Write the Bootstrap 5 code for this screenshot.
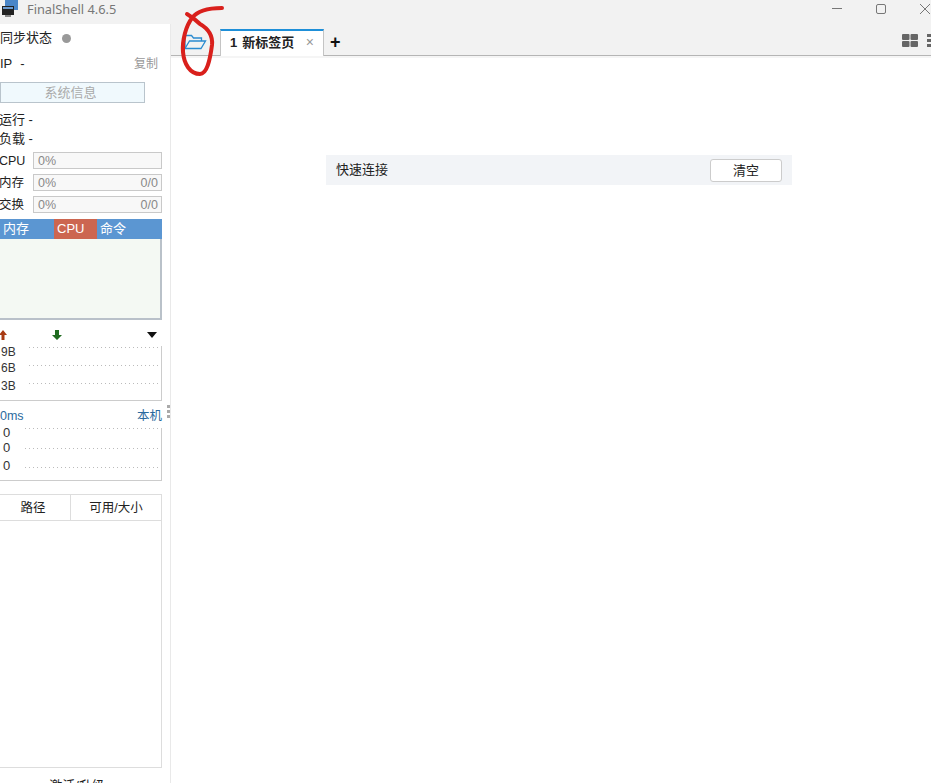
<!DOCTYPE html>
<html lang="zh-CN">

<head>
    <meta charset="UTF-8">
    <meta name="viewport" content="width=device-width, initial-scale=1.0">
    <title>FinalShell 4.6.5</title>
    <link href="https://cdn.jsdelivr.net/npm/bootstrap@5.3.0/dist/css/bootstrap.min.css" rel="stylesheet">
    <style>
        html, body { height: 783px; overflow: hidden; }
        body { font-family: "Liberation Sans", "Noto Sans CJK SC", sans-serif; font-size: 13px; color: #222; background: #fff; position: relative; }
        .title-bar { height: 24px; background: #f2f2f2; color: #777; }
        .title-bar .app-name { font-family: "Noto Sans", "Liberation Sans", sans-serif; font-size: 12.8px; line-height: 18px; margin-left: 9px; align-self: flex-start; }
        .win-btns { gap: 34px; margin-right: 1px; }
        .side { width: 171px; border-right: 1px solid #e9e9e9; padding-right: 8px; height: 759px; overflow: hidden; }
        .row-sync { height: 28px; }
        .sync-dot { width: 9px; height: 9px; border-radius: 50%; background: #999; margin-left: 10px; }
        .row-ip { height: 24px; }
        .ip-value { margin-left: 8px; }
        .muted-link { color: #999; font-size: 12px; margin-right: 4px; }
        .sys-btn { width: 145px; height: 21px; margin-top: 6px; background: #f0f9fd; border: 1px solid #b9c4cc; color: #aaa; line-height: 19px; text-align: center; padding-right: 4px; }
        .row-info { height: 19px; line-height: 19px; margin-left: -1px; }
        .row-info.first { margin-top: 7px; }
        .meters { margin-top: 4px; gap: 5px; }
        .meter-row { height: 17px; }
        .meter-label { width: 33px; flex: none; font-size: 12.5px; line-height: 19px; margin-left: -1px; white-space: nowrap; }
        .meter-bar { flex: 1; height: 17px; border: 1px solid #c9c9c9; background: #f8f8f8; color: #888; font-size: 12.5px; line-height: 17px; padding: 0 3px 0 4px; margin-left: 1px; }
        .mon-panel { margin-top: 6px; height: 101px; background: #f4f9f3; border: 2px solid #b9c1c9; border-top: 0; border-left: 0; }
        .mon-tabs { height: 20px; background: #5b96d2; color: #fff; line-height: 20px; margin-right: -2px; }
        .mon-tab { padding-left: 3px; width: 54px; }
        .mon-tab.on { background: #cc6650; width: 43px; }
        .arrow-row { height: 26px; padding: 3px 5px 0 0; }
        .arrow-down { margin-left: 44px; }
        .chart { border-right: 1px solid #ccc; border-bottom: 1px solid #ccc; color: #333; font-size: 12px; }
        .net-chart { height: 55px; padding-top: 1px; }
        .ping-chart { height: 53px; font-size: 13px; }
        .chart-row { line-height: 15px; }
        .chart-row .dots { flex: 1; height: 1px; margin-right: 2px; background: repeating-linear-gradient(90deg, #bbb 0 1px, transparent 1px 4px); }
        .chart-row .lbl { margin-top: -4px; height: 15px; }
        .chart-row:first-child .lbl { margin-top: -2px; }
        .net-chart .chart-row { height: 18px; }
        .net-chart .chart-row .lbl { width: 29px; padding-left: 1px; }
        .ping-chart .chart-row { height: 19px; }
        .ping-chart .chart-row:first-child { height: 20px; }
        .ping-chart .chart-row .lbl { width: 25px; padding-left: 3px; margin-top: -9px; }
        .ping-chart .chart-row:nth-child(2) .lbl { margin-top: -8px; }
        .ping-chart .chart-row:first-child .lbl { margin-top: -3px; }
        .ping-head { height: 27px; color: #2b6a9e; font-size: 12.5px; padding-top: 6px; position: relative; }
        .grip { position: absolute; right: -8px; top: 4px; width: 3px; height: 13px; background: repeating-linear-gradient(#aaa 0 3px, transparent 3px 5px); }
        .disk-table { margin-top: 13px; height: 274px; border: 1px solid #ddd; border-left: 0; }
        .disk-head { height: 26px; border-bottom: 1px solid #ddd; font-size: 12.5px; line-height: 26px; text-align: center; }
        .disk-head .c1 { width: 71px; padding-right: 4px; border-right: 1px solid #ddd; }
        .disk-head .c2 { flex: 1; }
        .upgrade { margin-top: 11px; line-height: 13px; text-align: center; padding-right: 8px; }
        .tab-bar { height: 32px; background: #f2f2f2; border-bottom: 1px solid #b5b5b5; box-shadow: 0 2px 0 #f5f5f5; }
        .open-btn { width: 49px; flex: none; padding: 7px 0 0 13px; }
        .sess-tab { width: 104px; height: 27px; background: #fff; border: 1px solid #c4c4c4; border-top: 2px solid #1e8fd8; border-bottom: 0; font-weight: 700; padding: 0 9px 2px; margin-bottom: -1px; }
        .sess-tab .num { margin-right: 5px; }
        .tab-close { color: #999; font-weight: 400; font-size: 14px; }
        .add-tab { font-size: 18px; font-weight: 700; line-height: 1; color: #111; margin-left: 6px; margin-top: 9px; }
        .view-btns { gap: 9px; padding-top: 10px; margin-right: -12px; }
        .quick-bar { width: 466px; height: 30px; margin: 99px 0 0 155px; background: #f2f4f7; padding: 0 10px; }
        .clear-btn { width: 72px; height: 23px; background: #fff; border: 1px solid #ccc; border-radius: 3px; line-height: 21px; text-align: center; }
        .scribble { position: absolute; left: 0; top: 0; pointer-events: none; }
    </style>
</head>

<body>
    <div class="title-bar d-flex align-items-start">
        <svg class="ms-0" width="18" height="18" viewBox="0 0 18 18">
            <path d="M5 -1h13v11h-13z" fill="#4a86c8"/>
            <path d="M2 6h12v9h-12z" fill="#222"/>
            <path d="M3 7h10v2h-10z" fill="#6a9ad0"/>
            <path d="M5 15h6v2h-6z" fill="#888"/>
        </svg>
        <span class="app-name">FinalShell 4.6.5</span>
        <div class="win-btns d-flex ms-auto">
            <svg width="10" height="16" viewBox="0 0 10 16"><path d="M0 8.500h10" stroke="#777"/></svg>
            <svg width="10" height="16" viewBox="0 0 10 16"><rect x=".5" y="4.500" width="9" height="9" rx="1.500" fill="none" stroke="#777"/></svg>
            <svg width="10" height="16" viewBox="0 0 10 16"><path d="M0 4l10 10M10 4l-10 10" stroke="#777"/></svg>
        </div>
    </div>
    <div class="d-flex">
        <aside class="side flex-shrink-0">
            <div class="row-sync d-flex align-items-center">同步状态<span class="sync-dot"></span></div>
            <div class="row-ip d-flex align-items-center justify-content-between">
                <span>IP<span class="ip-value">-</span></span><span class="muted-link">复制</span>
            </div>
            <div class="sys-btn">系统信息</div>
            <div class="row-info first">运行 -</div>
            <div class="row-info">负载 -</div>
            <div class="meters d-flex flex-column">
                <div class="meter-row d-flex"><span class="meter-label">CPU</span><div class="meter-bar">0%</div></div>
                <div class="meter-row d-flex"><span class="meter-label">内存</span><div class="meter-bar d-flex justify-content-between"><span>0%</span><span>0/0</span></div></div>
                <div class="meter-row d-flex"><span class="meter-label">交换</span><div class="meter-bar d-flex justify-content-between"><span>0%</span><span>0/0</span></div></div>
            </div>
            <div class="mon-panel">
                <div class="mon-tabs d-flex">
                    <div class="mon-tab">内存</div>
                    <div class="mon-tab on">CPU</div>
                    <div class="mon-tab">命令</div>
                </div>
            </div>
            <div class="arrow-row d-flex align-items-center">
                <svg width="8" height="10" viewBox="0 0 8 10"><path d="M4 0l4 5h-2.500v5h-3v-5h-2.500z" fill="#a83a12" transform="translate(-1 0)"/></svg>
                <svg class="arrow-down" width="10" height="10" viewBox="0 0 10 10"><path d="M5 10l5-5h-3v-5h-4v5h-3z" fill="#1f6b1f"/></svg>
                <svg class="ms-auto" width="10" height="6" viewBox="0 0 10 6"><path d="M0 0h10l-5 6z" fill="#111"/></svg>
            </div>
            <div class="chart net-chart">
                <div class="chart-row d-flex"><span class="lbl">9B</span><span class="dots"></span></div>
                <div class="chart-row d-flex"><span class="lbl">6B</span><span class="dots"></span></div>
                <div class="chart-row d-flex"><span class="lbl">3B</span><span class="dots"></span></div>
            </div>
            <div class="ping-head d-flex justify-content-between">
                <span>0ms</span><span>本机</span><span class="grip"></span>
            </div>
            <div class="chart ping-chart">
                <div class="chart-row d-flex"><span class="lbl">0</span><span class="dots"></span></div>
                <div class="chart-row d-flex"><span class="lbl">0</span><span class="dots"></span></div>
                <div class="chart-row d-flex"><span class="lbl">0</span><span class="dots"></span></div>
            </div>
            <div class="disk-table">
                <div class="disk-head d-flex">
                    <div class="c1">路径</div>
                    <div class="c2">可用/大小</div>
                </div>
            </div>
            <div class="upgrade">激活/升级</div>
        </aside>
        <main class="flex-grow-1 overflow-hidden">
            <div class="tab-bar d-flex align-items-end">
                <div class="open-btn align-self-start">
                    <svg width="23" height="17" viewBox="0 0 23 17" fill="none" stroke="#2b8bd0" stroke-width="1.300">
                        <path d="M1 15V2.500h6.500l2 2.500h8v3"/>
                        <path d="M1 15.500l4.500-7.500h16l-4.500 7.500z"/>
                    </svg>
                </div>
                <div class="sess-tab d-flex align-items-center">
                    <span class="num">1</span><span>新标签页</span><span class="tab-close ms-auto">×</span>
                </div>
                <div class="add-tab align-self-start">+</div>
                <div class="view-btns d-flex ms-auto align-self-start">
                    <svg width="16" height="14" viewBox="0 0 16 14" fill="#666"><rect width="7.500" height="6" rx="1"/><rect x="8.500" width="7.500" height="6" rx="1"/><rect y="7" width="7.500" height="6" rx="1"/><rect x="8.500" y="7" width="7.500" height="6" rx="1"/></svg>
                    <svg width="16" height="14" viewBox="0 0 16 14" fill="#666"><rect width="16" height="3"/><rect y="5" width="16" height="3"/><rect y="10" width="16" height="3"/></svg>
                </div>
            </div>
            <div class="quick-bar d-flex align-items-center justify-content-between">
                <span>快速连接</span>
                <div class="clear-btn">清空</div>
            </div>
        </main>
    </div>
    <svg class="scribble" width="240" height="90" viewBox="0 0 240 90" fill="none">
        <path d="M222 8C210 8 198 10 192 18C186 26 182 40 183 52C184 64 190 74 200 74C207 74 210 60 212 45C213 35 207 28 200 24C196 20 192 17 187 14" stroke="#d9201c" stroke-width="4" stroke-linecap="round"/>
    </svg>
    <script src="https://cdn.jsdelivr.net/npm/bootstrap@5.3.0/dist/js/bootstrap.bundle.min.js"></script>
</body>
</html>
